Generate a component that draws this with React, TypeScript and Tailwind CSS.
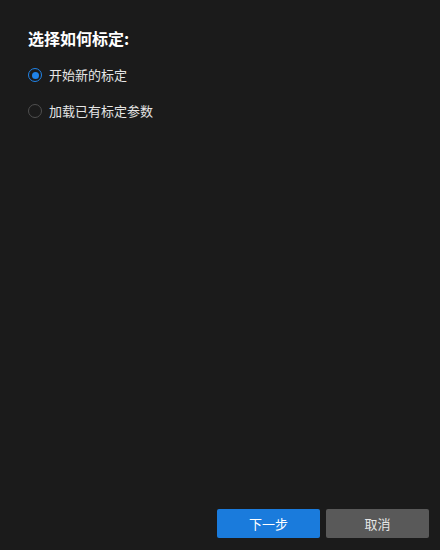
import React, { useState } from 'react';

const options = [
  { id: 'new', label: '开始新的标定' },
  { id: 'load', label: '加载已有标定参数' },
];

export default function App() {
  const [choice, setChoice] = useState('new');

  return (
    <div
      className="w-[440px] h-[550px] bg-[#1b1b1b] text-[#e6e6e6] flex flex-col"
      style={{ fontFamily: '"Noto Sans CJK SC", "Noto Sans", sans-serif' }}
    >
      <div className="flex-1 px-[28px] pt-[27px]">
        <h2 className="text-[16px] font-bold leading-[22px] text-white">选择如何标定:</h2>
        <div className="mt-[16px] flex flex-col gap-[16px]">
          {options.map((o) => (
            <label key={o.id} className="flex items-center gap-[7px] h-[20px] cursor-pointer">
              <span
                onClick={() => setChoice(o.id)}
                className={`w-[14px] h-[14px] rounded-full flex items-center justify-center border-[1.5px] ${
                  choice === o.id ? 'border-[#2083e8]' : 'border-[#4f4f4f]'
                }`}
              >
                {choice === o.id && <span className="w-[7px] h-[7px] rounded-full bg-[#2083e8]" />}
              </span>
              <span className="text-[13px] leading-[20px]">{o.label}</span>
            </label>
          ))}
        </div>
      </div>

      <div className="flex justify-end gap-[6px] pr-[11px] pb-[12px]">
        <button className="w-[103px] h-[29px] rounded-[2px] bg-[#1a7bdc] text-white text-[13px]">
          下一步
        </button>
        <button className="w-[103px] h-[29px] rounded-[2px] bg-[#595959] text-[#e6e6e6] text-[13px]">
          取消
        </button>
      </div>
    </div>
  );
}
